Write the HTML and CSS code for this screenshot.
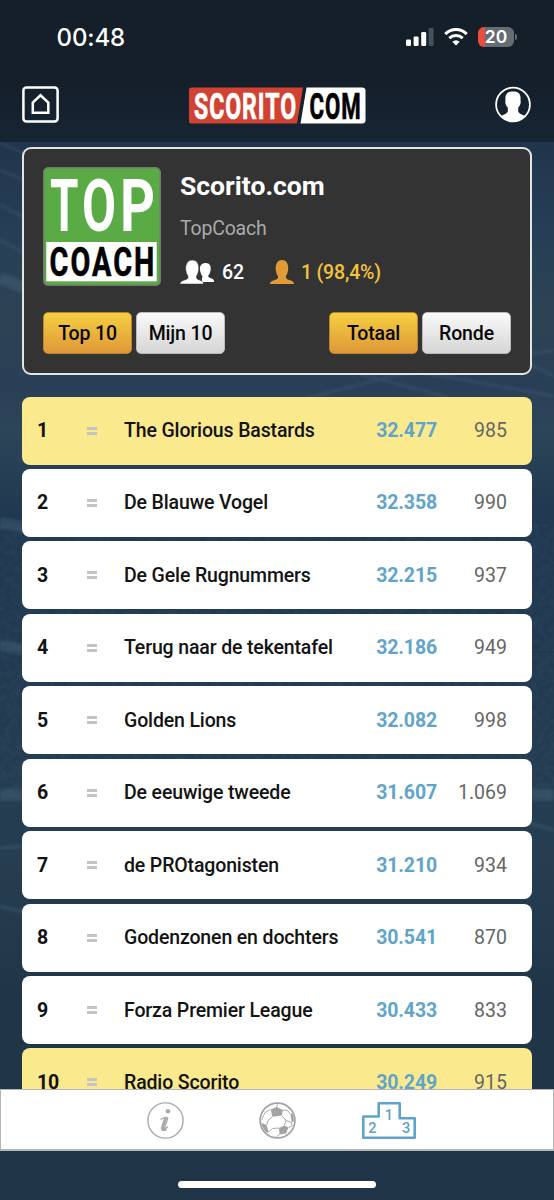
FILE: index.html
```html
<!DOCTYPE html>
<html lang="nl">
<head>
<meta charset="utf-8">
<title>Scorito.com</title>
<link rel="stylesheet" href="styles.css">
</head>
<body>
<div class="app">
  <svg class="stadium" viewBox="0 0 554 1200" preserveAspectRatio="none" aria-hidden="true">
    <defs>
      <filter id="soft"><feGaussianBlur stdDeviation="1.500"/></filter>
      <filter id="crowd"><feTurbulence type="fractalNoise" baseFrequency=".18" numOctaves="2"/><feColorMatrix values="0 0 0 0 .5  0 0 0 0 .6  0 0 0 0 .68  .5 0 0 0 -.15"/></filter>
    </defs>
    <rect y="535" width="554" height="105" filter="url(#crowd)" opacity=".2"/>
    <rect y="665" width="554" height="120" filter="url(#crowd)" opacity=".2"/>
    <g filter="url(#soft)" fill="none" stroke="#6f93ad" stroke-opacity=".2">
      <path d="M0 170L60 195M0 205L60 235M0 240L60 272M0 143L40 160" stroke-width="2"/>
      <path d="M0 278L60 302" stroke-width="12"/>
      <path d="M300 400L400 374L554 350M360 374L450 398M430 374L554 396M500 350L554 376" stroke-width="2"/>
      <path d="M0 523L30 528M0 646L30 650" stroke-width="11"/>
      <path d="M0 795H554" stroke-width="12"/>
      <path d="M0 848L30 846M0 906L30 914M524 822L554 830" stroke-width="3"/>
    </g>
  </svg>

  <header class="header">
    <div class="status">
      <span class="clock">00:48</span>
      <div class="status-icons">
        <svg width="28" height="19" viewBox="0 0 28 19"><g fill="#fff"><rect x="0" y="11.5" width="5" height="6.5" rx="1.3"/><rect x="7.6" y="8.5" width="5" height="9.5" rx="1.3"/><rect x="15.2" y="4" width="5" height="14" rx="1.3"/></g><rect x="22.6" y="0" width="5" height="18" rx="1.3" fill="#46515b"/></svg>
        <svg width="24" height="18" viewBox="0 0 24 18"><g fill="none" stroke="#fff" stroke-width="3"><path d="M1.3 6.1C7.3.1 16.700 .1 22.700 6.100"/><path d="M5.300 10.200C9.100 6.600 14.900 6.600 18.700 10.200"/></g><path d="M12 17.500L8.300 13.800Q12 10.700 15.700 13.800Z" fill="#fff"/></svg>
        <div class="battery"><span class="battery-body">20</span><i class="battery-tip"></i></div>
      </div>
    </div>
    <div class="navbar">
      <svg width="37" height="37" viewBox="0 0 37 37"><g fill="none" stroke="#fff"><rect x="1.400" y="1.400" width="34.200" height="34.200" rx="3" stroke-width="2.500"/><path d="M10.800 26.800V16.500L18.500 9.300L26.300 16.500V26.800Z" stroke-width="2.500"/></g></svg>
      <svg class="logo" width="178" height="37" viewBox="0 0 178 37"><path d="M3.500 .5H115L109 36.500H3.500Q1 36.500 1 34V3Q1 .5 3.500 .5Z" fill="#d04333"/><path d="M118.500 .5H174Q177.500 .5 177.500 3.500V33.500Q177.500 36.500 174 36.500H112.500Z" fill="#fff"/><text class="logo-text" x="6" y="31.500" textLength="103" lengthAdjust="spacingAndGlyphs" fill="#fff" stroke="#fff">SCORITO</text><text class="logo-text" x="121.500" y="31.500" textLength="52" lengthAdjust="spacingAndGlyphs" fill="#000" stroke="#000">COM</text></svg>
      <svg width="36" height="37" viewBox="0 0 36 37"><circle cx="18" cy="18.500" r="16.900" fill="none" stroke="#fff" stroke-width="1.800"/><path d="M18 5.500C23.500 5.500 26.200 7.800 25.500 14.500C26.200 17 25 20 23.200 21.500V25.500C24 28 28 28.500 30.300 30.300Q25 36 18 36T5.700 30.300C8 28.500 12 28 12.800 25.500V21.500C11 20 9.800 17 10.500 14.500C9.800 7.800 12.500 5.500 18 5.500Z" fill="#fff"/></svg>
    </div>
  </header>

  <main class="content">
    <section class="card">
      <div class="card-info">
        <svg class="badge" width="118" height="119" viewBox="0 0 118 119"><rect x=".8" y=".8" width="116.400" height="117.400" rx="4.500" fill="#5aab46" stroke="#6f7d6c" stroke-width="1.600"/><rect x="3.300" y="75" width="110.400" height="39.300" fill="#fff"/><g class="badge-text"><text x="7" y="63.700" font-size="73" textLength="28.500" lengthAdjust="spacingAndGlyphs" fill="#fff">T</text><text x="39" y="63.700" font-size="73" textLength="34" lengthAdjust="spacingAndGlyphs" fill="#fff">O</text><text x="77" y="63.700" font-size="73" textLength="35" lengthAdjust="spacingAndGlyphs" fill="#fff">P</text><text class="badge-coach" x="6.500" y="109.300" font-size="41.500" textLength="107" lengthAdjust="spacingAndGlyphs">COACH</text></g></svg>
        <div class="details">
          <h1 class="title">Scorito.com</h1>
          <p class="subtitle">TopCoach</p>
          <div class="stats">
            <svg width="35" height="24" viewBox="0 0 35 24"><path d="M22 22V17.700C23.500 17 22 16 21.300 14.500C18.500 8 20 3 25.500 3S32 8 29.500 13.800C28.300 15.500 28 16 28.500 17C30 18.300 34 18.500 34 21V22Z" fill="#fff"/><path d="M0 24C0 19.500 8 20.500 8 17.500V16C4.500 11.500 4.500 0 12.300 0S20 11.500 16.500 16V17.500C16.500 20.500 23.500 19.500 23.500 24Z" fill="#fff" stroke="#333" stroke-width=".5"/></svg>
            <span class="members">62</span>
            <svg class="gold-user" width="24" height="24" viewBox="0 0 24 24"><path d="M0 24C0 19.500 8 20.500 8 17.500V16C4.500 11.500 4.500 0 12 0S19.500 11.500 16 16V17.500C16 20.500 24 19.500 24 24Z" fill="#e09b37"/></svg>
            <span class="rank">1 (98,4%)</span>
          </div>
        </div>
      </div>
      <div class="buttons">
        <button class="btn btn-on">Top 10</button>
        <button class="btn">Mijn 10</button>
        <button class="btn btn-on btn-right">Totaal</button>
        <button class="btn">Ronde</button>
      </div>
    </section>

    <ol class="ranking">
      <li class="row row-mark"><b class="pos">1</b><i class="same"></i><span class="name">The Glorious Bastards</span><b class="total">32.477</b><span class="round">985</span></li>
      <li class="row"><b class="pos">2</b><i class="same"></i><span class="name">De Blauwe Vogel</span><b class="total">32.358</b><span class="round">990</span></li>
      <li class="row"><b class="pos">3</b><i class="same"></i><span class="name">De Gele Rugnummers</span><b class="total">32.215</b><span class="round">937</span></li>
      <li class="row"><b class="pos">4</b><i class="same"></i><span class="name">Terug naar de tekentafel</span><b class="total">32.186</b><span class="round">949</span></li>
      <li class="row"><b class="pos">5</b><i class="same"></i><span class="name">Golden Lions</span><b class="total">32.082</b><span class="round">998</span></li>
      <li class="row"><b class="pos">6</b><i class="same"></i><span class="name">De eeuwige tweede</span><b class="total">31.607</b><span class="round">1.069</span></li>
      <li class="row"><b class="pos">7</b><i class="same"></i><span class="name">de PROtagonisten</span><b class="total">31.210</b><span class="round">934</span></li>
      <li class="row"><b class="pos">8</b><i class="same"></i><span class="name">Godenzonen en dochters</span><b class="total">30.541</b><span class="round">870</span></li>
      <li class="row"><b class="pos">9</b><i class="same"></i><span class="name">Forza Premier League</span><b class="total">30.433</b><span class="round">833</span></li>
      <li class="row row-mark"><b class="pos">10</b><i class="same"></i><span class="name">Radio Scorito</span><b class="total">30.249</b><span class="round">915</span></li>
    </ol>
  </main>

  <nav class="tabbar">
    <svg width="37" height="37" viewBox="0 0 37 37"><circle cx="18.500" cy="18.500" r="17.600" fill="none" stroke="#aaa" stroke-width="1.400"/><circle cx="21" cy="9.200" r="2.300" fill="#aaa"/><path d="M13.500 17.500C16 16 18.500 15 20 15.300C21.200 15.600 20.500 17.500 20 19L17.500 26C17.300 27.500 19.500 26 21 24.500" fill="none" stroke="#aaa" stroke-width="1.200"/><path d="M18.700 15.800L15.500 25.500C15 28.500 17.500 28 19 27" fill="none" stroke="#aaa" stroke-width="3"/></svg>
    <svg class="ball" width="37" height="37" viewBox="0 0 37 37"><defs><clipPath id="ballClip"><circle cx="18.500" cy="18.500" r="16.300"/></clipPath></defs><g clip-path="url(#ballClip)"><g fill="#a3a3a3"><path d="M11.700 7.500L17.700 5L24 8L22.700 13.500L13.500 14.800Z"/><path d="M24 1L27 4.500L32 9L36 9L30 0Z"/><path d="M0 19.500L7.700 23.200L9.500 30L5 33L0 27Z"/><path d="M20 26L25.300 23.500L29.500 25.500L27 31.500L20.500 32.500Z"/><path d="M31.500 12.500L35 9L37 18L32.700 20.500Z"/></g><path d="M13.500 14.800L9 18.500L7.700 23.200M22.700 13.500L27 18.500L25.300 23.500M20 26L13.500 26.500L9.500 30M24 8L28.500 8.500L31.500 12.500M11.700 7.500L6 10.500L2.500 18M27 18.500L32.700 20.500L33 24L29.500 25.500M17.700 5L19 1M20.500 32.500L16 36" fill="none" stroke="#aaa" stroke-width="1"/></g><circle cx="18.500" cy="18.500" r="17.400" fill="none" stroke="#a3a3a3" stroke-width="1.700"/></svg>
    <svg class="podium" width="54" height="37" viewBox="0 0 54 37"><path d="M1.300 14.500H16.700V1.300H37.700V16.300H52.700V35.700H1.300Z" fill="none" stroke="#60a3c8" stroke-width="2.600" stroke-linejoin="round"/><g class="podium-text"><text x="6.200" y="30.500">2</text><text x="22.800" y="18.200">1</text><text x="40" y="30.500">3</text></g></svg>
  </nav>
  <footer class="home-area"><span class="home-indicator"></span></footer>
</div>
</body>
</html>
```
FILE: styles.css
```css
* { box-sizing: border-box; }
body { margin: 0; font-family: Roboto, "Liberation Sans", sans-serif; }
svg { display: block; flex: none; }
h1, p, ol { margin: 0; padding: 0; }

.app {
  position: relative;
  isolation: isolate;
  display: flex;
  flex-direction: column;
  width: 554px;
  height: 1200px;
  overflow: hidden;
  background: linear-gradient(180deg, #20354c 142px, #263f56 230px, #2c4353 320px, #293f57 385px, #2d4558 430px, #203850 520px, #223b51 740px, #263e50 860px, #203548 1000px, #203548 1200px);
}
.stadium { position: absolute; inset: 0; width: 100%; height: 100%; z-index: -1; }

.header { height: 142px; background: linear-gradient(#141f2a 55%, #172533); }
.status { display: flex; justify-content: space-between; height: 86px; padding: 22px 37px 0 56.500px; color: #fff; }
.clock { font: 500 24px/31px Inter, Roboto, sans-serif; letter-spacing: -.1px; }
.status-icons { display: flex; gap: 10px; height: 30px; align-items: center; }
.battery { display: flex; align-items: center; gap: 1px; }
.battery-body {
  width: 36px;
  border-radius: 6px;
  background: linear-gradient(90deg, #eb4d3d 7px, #656d74 7px);
  font: 600 17.500px/20px Inter, Roboto, sans-serif;
  text-align: center;
}
.battery-tip { width: 2px; height: 6px; border-radius: 0 2px 2px 0; background: #656d74; }
.navbar { display: flex; justify-content: space-between; padding: 0 23px 0 22px; }
.logo { margin-top: 1px; }
.logo-text { font: 700 37px Roboto, sans-serif; letter-spacing: 1.500px; stroke-width: .7px; }

.content { flex: 1; min-height: 0; overflow: hidden; padding: 5px 22px 0; }
.card { height: 228px; padding: 18px 19px; border: 2px solid #e2e4e6; border-radius: 9px; background: #333; }
.card-info { display: flex; gap: 19px; height: 145px; }
.badge-text { font-family: Roboto, sans-serif; font-weight: 700; }
.badge-coach { letter-spacing: 3px; stroke: #000; stroke-width: .6px; }
.title { margin-top: 3px; color: #fff; font-weight: 700; font-size: 26.500px; line-height: 32px; }
.subtitle { margin-top: 14px; color: #aaa; font-size: 19.500px; line-height: 26px; letter-spacing: -.2px; }
.stats { display: flex; align-items: center; margin-top: 18px; height: 24px; font-weight: 500; font-size: 19.500px; letter-spacing: -.15px; color: #fff; }
.members { margin-left: 7px; }
.gold-user { margin-left: 26px; }
.rank { margin-left: 7px; color: #f4c23f; }
.buttons { display: flex; gap: 4px; }
.btn {
  width: 89px;
  height: 42px;
  padding: 0;
  border: 1.500px solid #bbb;
  border-radius: 5px;
  background: linear-gradient(#fafafa, #d5d5d5);
  color: #080808;
  font: 500 19.500px Roboto, sans-serif;
  letter-spacing: -.15px;
}
.btn-on { border-color: #bd822e; background: linear-gradient(#f6cf42, #de9838); }
.btn-right { margin-left: auto; }

.ranking { display: flex; flex-direction: column; gap: 4.450px; margin-top: 21.500px; list-style: none; }
.row {
  display: grid;
  grid-template-columns: 50px 37px 1fr 75px 70px;
  align-items: center;
  flex: none;
  height: 68px;
  padding: 0 25px 0 15px;
  border-radius: 8px;
  background: #fff;
  color: #131313;
  font-weight: 500;
  font-size: 19.500px;
  letter-spacing: -.14px;
}
.row-mark { background: #fae98d; }
.pos { font-weight: 700; }
.same { width: 10px; height: 8px; border: solid #c4c4c4; border-width: 3px 0; }
.total { color: #5fa5c9; font-weight: 700; text-align: right; }
.round { color: #666; font-weight: 400; letter-spacing: 0; text-align: right; }

.tabbar {
  display: flex;
  flex: none;
  align-items: center;
  height: 62px;
  padding: 2px 0 0 146px;
  border: 2px solid #b4b4b8;
  border-width: 1px 1px 2px;
  background: #fff;
}
.ball { margin-left: 75px; }
.podium { margin-left: 66px; }
.podium-text { fill: #60a3c8; font: 500 14.500px Roboto, sans-serif; }
.home-area { flex: none; height: 49px; padding-top: 30px; background: #203548; }
.home-indicator { display: block; width: 198px; height: 7px; margin: 0 auto; border-radius: 4px; background: #fff; }
```
